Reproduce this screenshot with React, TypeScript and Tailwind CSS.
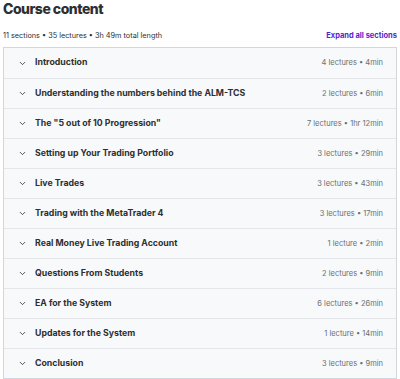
import { ChevronDown } from "lucide-react";

interface Section {
  title: string;
  meta: string;
}

const sections: Section[] = [
  { title: "Introduction", meta: "4 lectures • 4min" },
  { title: "Understanding the numbers behind the ALM-TCS", meta: "2 lectures • 6min" },
  { title: 'The "5 out of 10 Progression"', meta: "7 lectures • 1hr 12min" },
  { title: "Setting up Your Trading Portfolio", meta: "3 lectures • 29min" },
  { title: "Live Trades", meta: "3 lectures • 43min" },
  { title: "Trading with the MetaTrader 4", meta: "3 lectures • 17min" },
  { title: "Real Money Live Trading Account", meta: "1 lecture • 2min" },
  { title: "Questions From Students", meta: "2 lectures • 9min" },
  { title: "EA for the System", meta: "6 lectures • 26min" },
  { title: "Updates for the System", meta: "1 lecture • 14min" },
  { title: "Conclusion", meta: "3 lectures • 9min" }
];

function SectionRow({ section }: { section: Section }) {
  return (
    <div className="flex h-[30px] items-center border-t border-[#e4e6ea] first:border-t-0 bg-[#f7f9fa] pl-[14px] pr-[13px]">
      <ChevronDown className="h-[9px] w-[9px] text-[#2d2f31]" strokeWidth={2.2} />
      <span className="ml-[8px] flex-1 truncate text-[8.75px] font-bold text-[#2d2f31]">
        {section.title}
      </span>
      <span className="text-[7.5px] text-[#6a6f73]">{section.meta}</span>
    </div>
  );
}

export default function App() {
  return (
    <div className="h-[379px] w-[400px] overflow-hidden bg-white px-[3px] font-['Inter',sans-serif] text-[#2d2f31]">
      <h2 className="text-[14px] font-extrabold leading-[18px] tracking-[-0.5px]">
        Course content
      </h2>
      <div className="mt-[13px] flex h-[10px] items-center justify-between">
        <span className="text-[7.3px] text-[#2d2f31]">
          11 sections • 35 lectures • 3h 49m total length
        </span>
        <span className="text-[7.5px] font-bold text-[#5624d0]">Expand all sections</span>
      </div>
      <div className="mt-[6px] border border-[#d1d7dc]">
        {sections.map((s) => (
          <SectionRow key={s.title} section={s} />
        ))}
      </div>
    </div>
  );
}
